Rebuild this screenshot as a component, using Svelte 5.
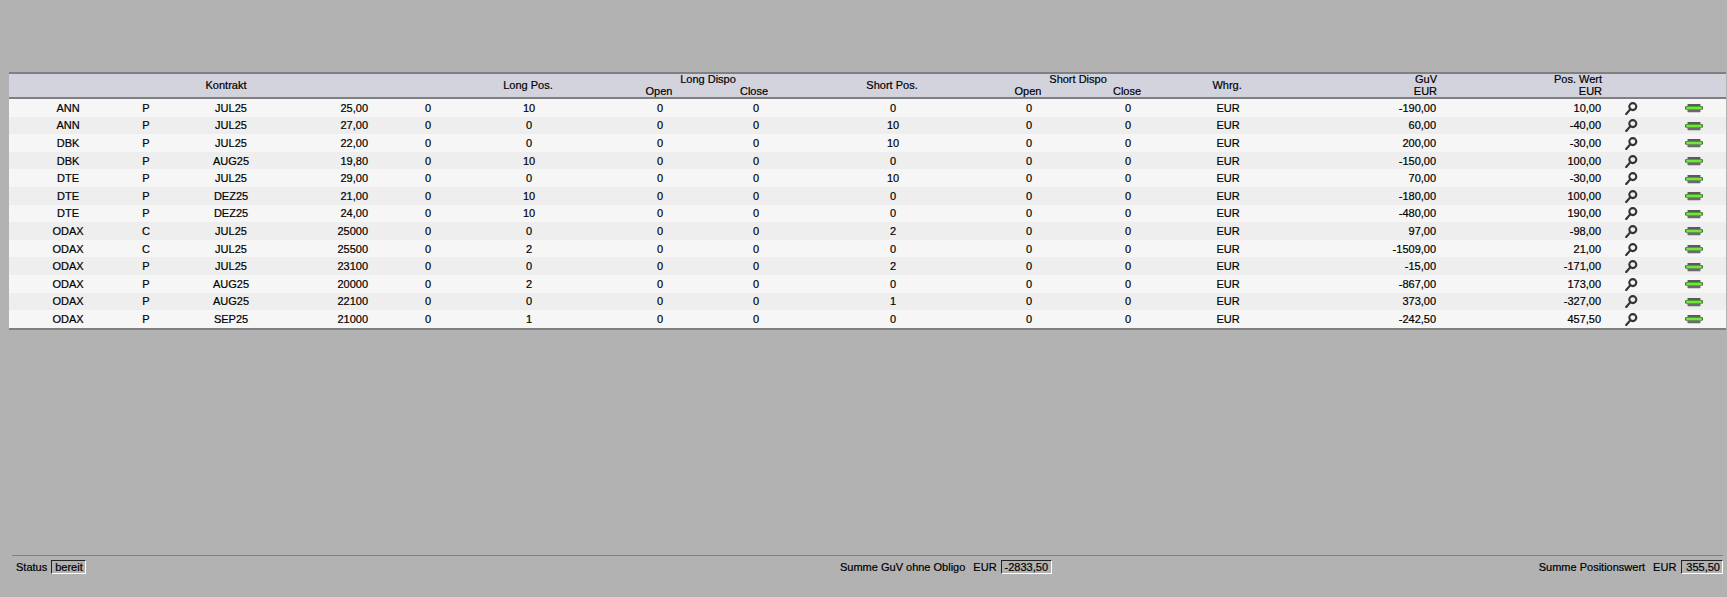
<script>
  const rows = [
    ['ANN','P','JUL25','25,00','0','10','0','0','0','0','0','EUR','-190,00','10,00'],
    ['ANN','P','JUL25','27,00','0','0','0','0','10','0','0','EUR','60,00','-40,00'],
    ['DBK','P','JUL25','22,00','0','0','0','0','10','0','0','EUR','200,00','-30,00'],
    ['DBK','P','AUG25','19,80','0','10','0','0','0','0','0','EUR','-150,00','100,00'],
    ['DTE','P','JUL25','29,00','0','0','0','0','10','0','0','EUR','70,00','-30,00'],
    ['DTE','P','DEZ25','21,00','0','10','0','0','0','0','0','EUR','-180,00','100,00'],
    ['DTE','P','DEZ25','24,00','0','10','0','0','0','0','0','EUR','-480,00','190,00'],
    ['ODAX','C','JUL25','25000','0','0','0','0','2','0','0','EUR','97,00','-98,00'],
    ['ODAX','C','JUL25','25500','0','2','0','0','0','0','0','EUR','-1509,00','21,00'],
    ['ODAX','P','JUL25','23100','0','0','0','0','2','0','0','EUR','-15,00','-171,00'],
    ['ODAX','P','AUG25','20000','0','2','0','0','0','0','0','EUR','-867,00','173,00'],
    ['ODAX','P','AUG25','22100','0','0','0','0','1','0','0','EUR','373,00','-327,00'],
    ['ODAX','P','SEP25','21000','0','1','0','0','0','0','0','EUR','-242,50','457,50'],
  ];
  const widths = [118,38,132,116,30,172,90,102,172,100,98,104,160,165,50,70];
</script>

<div class="page">
  <table>
    <colgroup>
      {#each widths as w}<col style:width="{w}px" />{/each}
    </colgroup>
    <thead>
      <tr>
        <th colspan="5" rowspan="2">Kontrakt</th>
        <th rowspan="2" class="nudge">Long Pos.</th>
        <th colspan="2" class="ld">Long Dispo</th>
        <th rowspan="2" class="nudge">Short Pos.</th>
        <th colspan="2">Short Dispo</th>
        <th rowspan="2" class="nudge wide-nudge">Whrg.</th>
        <th class="r">GuV</th>
        <th class="r">Pos. Wert</th>
        <th rowspan="2" colspan="2"></th>
      </tr>
      <tr>
        <th class="nudge">Open</th><th class="nudge wide-nudge">Close</th><th class="nudge">Open</th><th class="nudge">Close</th>
        <th class="r">EUR</th><th class="r">EUR</th>
      </tr>
    </thead>
    <tbody>
      {#each rows as row}
        <tr>
          {#each row as cell, i}
            <td class:num={i === 12 || i === 13} class:strike={i === 3} class:cur-cell={i === 11}>{cell}</td>
          {/each}
          <td>
            <svg class="icon" width="14" height="14" viewBox="0 0 14 14" aria-hidden="true">
              <circle cx="8.8" cy="5.6" r="3.5" fill="none" stroke="#333" stroke-width="2.1" />
              <path d="M6.2 8.4 L2.2 13" stroke="#333" stroke-width="2.2" stroke-linecap="round" />
            </svg>
          </td>
          <td>
            <svg class="icon print" width="18" height="9" viewBox="0 0 18 9" aria-hidden="true">
              <rect x="2.5" y="0" width="13" height="2.2" rx="0.6" fill="#5a5a5a" />
              <rect x="0" y="2" width="18" height="3.8" rx="1.4" fill="#3f6e2c" />
              <rect x="1.2" y="2.6" width="15.6" height="2.6" fill="#6fe83c" />
              <rect x="2.5" y="5.8" width="13" height="2.4" rx="0.6" fill="#6a6a6a" />
            </svg>
          </td>
        </tr>
      {/each}
    </tbody>
  </table>

  <div class="footer">
    <div class="group"><span>Status</span><output class="box status">bereit</output></div>
    <div class="group mid"><span>Summe GuV ohne Obligo</span><span class="cur">EUR</span><output class="box tight">-2833,50</output></div>
    <div class="group end"><span>Summe Positionswert</span><span class="cur">EUR</span><output class="box last">355,50</output></div>
  </div>
</div>

<style>
  :global(body) {
    margin: 0;
    background: #b2b2b2;
  }
  .page {
    height: 597px;
    box-sizing: border-box;
    padding: 72px 1px 0 9px;
    display: flex;
    flex-direction: column;
    font: 11px/12px "Liberation Sans", Arial, sans-serif;
    color: #000;
    overflow: hidden;
    -webkit-text-stroke: 0.2px #000;
  }
  table {
    table-layout: fixed;
    width: 1717px;
    border-collapse: separate;
    border-spacing: 0;
    border-top: 2px solid #808080;
    border-bottom: 2px solid #808080;
  }
  thead th {
    background: #d3d3de;
    font-weight: normal;
    padding: 0;
    height: 11.5px;
    line-height: 11px;
    text-align: center;
  }
  thead tr:last-child th,
  thead th[rowspan="2"] {
    border-bottom: 2px solid #808080;
  }
  thead th.nudge { padding-right: 2px; }
  thead th.wide-nudge { padding-right: 4px; }
  thead th.ld { padding-right: 6px; }
  thead th.r { text-align: right; padding-right: 4px; }
  tbody td {
    height: 17.6px;
    padding: 0;
    text-align: center;
    line-height: 12px;
    white-space: nowrap;
  }
  tbody td.num { text-align: right; padding-right: 5px; }
  tbody td.strike { text-align: right; padding-right: 45px; }
  tbody td.cur-cell { padding-right: 2px; }
  tbody tr:nth-child(odd) td { background: #f6f6f6; }
  tbody tr:nth-child(even) td { background: #eeeeee; }
  .icon { display: block; margin: 0 auto; }
  .print { position: relative; left: 3px; top: 1px; }
  .footer {
    margin: 225px 3px 0 3px;
    border-top: 1px solid #808080;
    padding-top: 4px;
    display: grid;
    grid-template-columns: 828px 213px 1fr;
  }
  .group {
    display: flex;
    align-items: center;
    gap: 5px;
    padding-left: 4px;
    white-space: nowrap;
  }
  .mid { padding-left: 0; }
  .end { justify-content: flex-end; padding-left: 0; }
  .cur { margin-left: 3px; }
  .box {
    box-sizing: border-box;
    height: 14px;
    padding: 0 4px;
    line-height: 12px;
    border: 1px solid;
    border-color: #222 #fff #fff #222;
  }
  .status { padding: 0 2px 0 3px; margin-left: -1px; }
  .tight { padding: 0 3px; margin-left: -1px; }
  .last { padding: 0 2px 0 4px; }
</style>
